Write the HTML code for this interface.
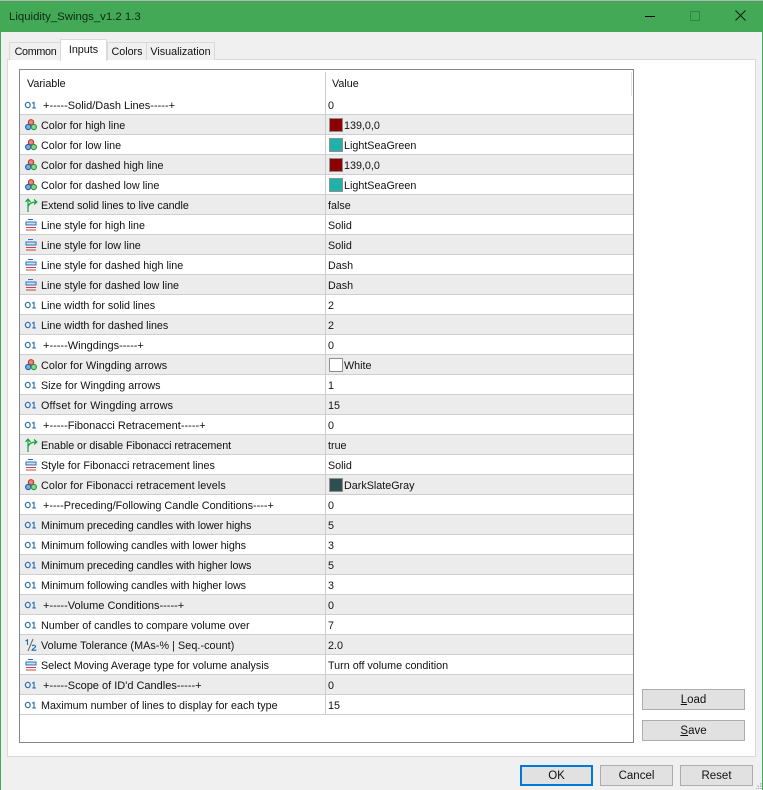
<!DOCTYPE html>
<html>
<head>
<meta charset="utf-8">
<style>
html,body{margin:0;padding:0}
body{width:763px;height:790px;overflow:hidden;position:relative;background:#f0f0f0;font-family:"Liberation Sans",sans-serif;font-size:10.75px;color:#111}
.a{position:absolute}
.title{left:0;top:1px;width:763px;height:31px;background:#43a956}
.tt{left:9px;top:9px;font-size:11.4px;color:#0c2a14;line-height:16px}
.lb{left:0;top:1px;width:1px;height:789px;background:#43a956}
.rb{left:762px;top:1px;width:1px;height:789px;background:#43a956}
.panel{left:7px;top:59px;width:749px;height:698px;background:#fff;border:1px solid #d9d9d9;box-sizing:border-box}
.tab{top:42px;height:17px;background:#f0f0f0;border:1px solid #d9d9d9;border-bottom:0;box-sizing:content-box;text-align:center;line-height:18px}
.tab.on{top:39px;height:21px;background:#fff;line-height:20px;z-index:2;border-bottom:0}
.grid{left:19px;top:69px;width:615px;height:674px;border:1px solid #82878c;box-sizing:border-box;background:#fff}
.hd{left:0;top:0;height:25px;line-height:29px}
.sep{left:305px;top:2px;width:1px;height:642px;background:#cfcfcf}
.r{position:absolute;left:0;width:613px;height:20px;box-sizing:border-box;border-bottom:1px solid #cfcfcf;line-height:23px}
.r.g{background:#ececec}
.r svg{position:absolute;left:4px;top:3px;width:14px;height:14px}
.n{position:absolute;left:21px;top:0;white-space:nowrap}
.n.s{left:23px;font-size:11px}
.v{position:absolute;left:308px;top:0;white-space:nowrap}
.v.c{left:324px}
.sw{position:absolute;left:309px;top:3px;width:12px;height:12px;border:1px solid #8f8f8f}
.b{height:19px;background:#e1e1e1;border:1px solid #adadad;text-align:center;line-height:21px;font-size:11.5px;color:#111}
.ok{border:2px solid #0078d7;height:17px;line-height:19px}
u{text-decoration:underline}
</style>
</head>
<body>
<svg width="0" height="0" style="position:absolute">
<symbol id="i01" viewBox="0 0 14 14"><ellipse cx="3.8" cy="7" rx="2.4" ry="2.7" fill="none" stroke="#1f6cb0" stroke-width="1.2"/><path d="M8.2 5.3 10 4.4v5.4M8.4 9.9h3.4" fill="none" stroke="#1f6cb0" stroke-width="1.1"/></symbol>
<symbol id="ic" viewBox="0 0 14 14"><circle cx="7" cy="4.3" r="2.6" fill="#e58c85" stroke="#c0392b" stroke-width="1.2"/><circle cx="4.2" cy="9" r="2.6" fill="#7fa9e0" stroke="#2a5fae" stroke-width="1.2"/><circle cx="9.8" cy="9" r="2.6" fill="#8bd496" stroke="#2b9b40" stroke-width="1.2"/></symbol>
<symbol id="il" viewBox="0 0 14 14"><path d="M4 1.5h5" stroke="#2a6fb8" stroke-width="1"/><rect x="2" y="4" width="10" height="3" fill="#cfe0f3" stroke="#2a6fb8" stroke-width="1"/><path d="M2 9.5h10M2 12h10" stroke="#c8433a" stroke-width="1"/></symbol>
<symbol id="ib" viewBox="0 0 14 14"><path d="M4 14V1M1.5 4 4 1l2.5 3M4 9.5C4.5 6 7 4 12.5 4M10 1.5 12.8 4 10 6.5" fill="none" stroke="#12a33a" stroke-width="1.2"/></symbol>
<symbol id="if" viewBox="0 0 14 14"><path d="M1.5 3 3.5 1.8V7" fill="none" stroke="#1f6cb0" stroke-width="1.1"/><path d="M9 1 4 13" stroke="#666" stroke-width="1"/><path d="M8 8c1-1.2 3.5-1 3.5.6 0 1.2-3 2-3.5 3.6h4.4" fill="none" stroke="#1f6cb0" stroke-width="1.1"/></symbol>
</svg>

<div class="a" style="left:0;top:0;width:763px;height:1px;background:#b5b5b5"></div>
<div class="a title"></div>
<div class="a tt">Liquidity_Swings_v1.2 1.3</div>
<div class="a" style="left:645px;top:16px;width:10px;height:1px;background:#000"></div>
<div class="a" style="left:690px;top:11px;width:8px;height:8px;border:1px solid #2e8a42"></div>
<svg class="a" style="left:735px;top:10px" width="11" height="11" viewBox="0 0 11 11"><path d="M.5.5l10 10M10.5.5l-10 10" stroke="#0a1a0e" stroke-width="1"/></svg>
<div class="a lb"></div><div class="a rb"></div>

<div class="a panel"></div>
<div class="a tab" style="left:9px;width:51px;letter-spacing:-.3px">Common</div>
<div class="a tab on" style="left:60px;width:45px">Inputs</div>
<div class="a tab" style="left:107px;width:38px">Colors</div>
<div class="a tab" style="left:146px;width:67px">Visualization</div>

<div class="a grid">
<div class="a hd" style="left:7px">Variable</div>
<div class="a hd" style="left:312px">Value</div>
<div class="a" style="left:611px;top:2px;width:1px;height:24px;background:#e3e3e3"></div>
<div class="r" style="top:25px"><svg><use href="#i01"/></svg><span class="n s">+-----Solid/Dash Lines-----+</span><span class="v">0</span></div>
<div class="r g" style="top:45px"><svg><use href="#ic"/></svg><span class="n">Color for high line</span><i class="sw" style="background:#8b0000"></i><span class="v c">139,0,0</span></div>
<div class="r" style="top:65px"><svg><use href="#ic"/></svg><span class="n">Color for low line</span><i class="sw" style="background:#20b2aa"></i><span class="v c">LightSeaGreen</span></div>
<div class="r g" style="top:85px"><svg><use href="#ic"/></svg><span class="n">Color for dashed high line</span><i class="sw" style="background:#8b0000"></i><span class="v c">139,0,0</span></div>
<div class="r" style="top:105px"><svg><use href="#ic"/></svg><span class="n">Color for dashed low line</span><i class="sw" style="background:#20b2aa"></i><span class="v c">LightSeaGreen</span></div>
<div class="r g" style="top:125px"><svg><use href="#ib"/></svg><span class="n" style="letter-spacing:-.05px">Extend solid lines to live candle</span><span class="v">false</span></div>
<div class="r" style="top:145px"><svg><use href="#il"/></svg><span class="n">Line style for high line</span><span class="v">Solid</span></div>
<div class="r g" style="top:165px"><svg><use href="#il"/></svg><span class="n">Line style for low line</span><span class="v">Solid</span></div>
<div class="r" style="top:185px"><svg><use href="#il"/></svg><span class="n">Line style for dashed high line</span><span class="v">Dash</span></div>
<div class="r g" style="top:205px"><svg><use href="#il"/></svg><span class="n">Line style for dashed low line</span><span class="v">Dash</span></div>
<div class="r" style="top:225px"><svg><use href="#i01"/></svg><span class="n">Line width for solid lines</span><span class="v">2</span></div>
<div class="r g" style="top:245px"><svg><use href="#i01"/></svg><span class="n">Line width for dashed lines</span><span class="v">2</span></div>
<div class="r" style="top:265px"><svg><use href="#i01"/></svg><span class="n s">+-----Wingdings-----+</span><span class="v">0</span></div>
<div class="r g" style="top:285px"><svg><use href="#ic"/></svg><span class="n" style="letter-spacing:.08px">Color for Wingding arrows</span><i class="sw" style="background:#fff"></i><span class="v c">White</span></div>
<div class="r" style="top:305px"><svg><use href="#i01"/></svg><span class="n">Size for Wingding arrows</span><span class="v">1</span></div>
<div class="r g" style="top:325px"><svg><use href="#i01"/></svg><span class="n" style="letter-spacing:.2px">Offset for Wingding arrows</span><span class="v">15</span></div>
<div class="r" style="top:345px"><svg><use href="#i01"/></svg><span class="n s">+-----Fibonacci Retracement-----+</span><span class="v">0</span></div>
<div class="r g" style="top:365px"><svg><use href="#ib"/></svg><span class="n" style="letter-spacing:-.06px">Enable or disable Fibonacci retracement</span><span class="v">true</span></div>
<div class="r" style="top:385px"><svg><use href="#il"/></svg><span class="n">Style for Fibonacci retracement lines</span><span class="v">Solid</span></div>
<div class="r g" style="top:405px"><svg><use href="#ic"/></svg><span class="n" style="letter-spacing:.1px">Color for Fibonacci retracement levels</span><i class="sw" style="background:#2f4f4f"></i><span class="v c">DarkSlateGray</span></div>
<div class="r" style="top:425px"><svg><use href="#i01"/></svg><span class="n s" style="font-size:10.85px">+----Preceding/Following Candle Conditions----+</span><span class="v">0</span></div>
<div class="r g" style="top:445px"><svg><use href="#i01"/></svg><span class="n" style="letter-spacing:-.07px">Minimum preceding candles with lower highs</span><span class="v">5</span></div>
<div class="r" style="top:465px"><svg><use href="#i01"/></svg><span class="n" style="letter-spacing:-.07px">Minimum following candles with lower highs</span><span class="v">3</span></div>
<div class="r g" style="top:485px"><svg><use href="#i01"/></svg><span class="n" style="letter-spacing:-.07px">Minimum preceding candles with higher lows</span><span class="v">5</span></div>
<div class="r" style="top:505px"><svg><use href="#i01"/></svg><span class="n" style="letter-spacing:-.07px">Minimum following candles with higher lows</span><span class="v">3</span></div>
<div class="r g" style="top:525px"><svg><use href="#i01"/></svg><span class="n s">+-----Volume Conditions-----+</span><span class="v">0</span></div>
<div class="r" style="top:545px"><svg><use href="#i01"/></svg><span class="n">Number of candles to compare volume over</span><span class="v">7</span></div>
<div class="r g" style="top:565px"><svg><use href="#if"/></svg><span class="n" style="letter-spacing:.07px">Volume Tolerance (MAs-% | Seq.-count)</span><span class="v">2.0</span></div>
<div class="r" style="top:585px"><svg><use href="#il"/></svg><span class="n">Select Moving Average type for volume analysis</span><span class="v">Turn off volume condition</span></div>
<div class="r g" style="top:605px"><svg><use href="#i01"/></svg><span class="n s">+-----Scope of ID'd Candles-----+</span><span class="v">0</span></div>
<div class="r" style="top:625px"><svg><use href="#i01"/></svg><span class="n">Maximum number of lines to display for each type</span><span class="v">15</span></div>
<div class="a sep"></div>
</div>

<div class="a b" style="left:642px;top:689px;width:101px"><u>L</u>oad</div>
<div class="a b" style="left:642px;top:720px;width:101px"><u>S</u>ave</div>
<div class="a b ok" style="left:520px;top:765px;width:69px">OK</div>
<div class="a b" style="left:600px;top:765px;width:71px">Cancel</div>
<div class="a b" style="left:680px;top:765px;width:71px">Reset</div>
<svg class="a" style="left:756px;top:783px" width="6" height="6"><path d="M4 0h1.5v1.5H4zM1.5 2.5H3V4H1.5zM4 2.5h1.5V4H4zM0 5h1.5v1H0zM2 5h1.5v1H2zM4 5h1.5v1H4z" fill="#b8b8b8"/></svg>
</body>
</html>
